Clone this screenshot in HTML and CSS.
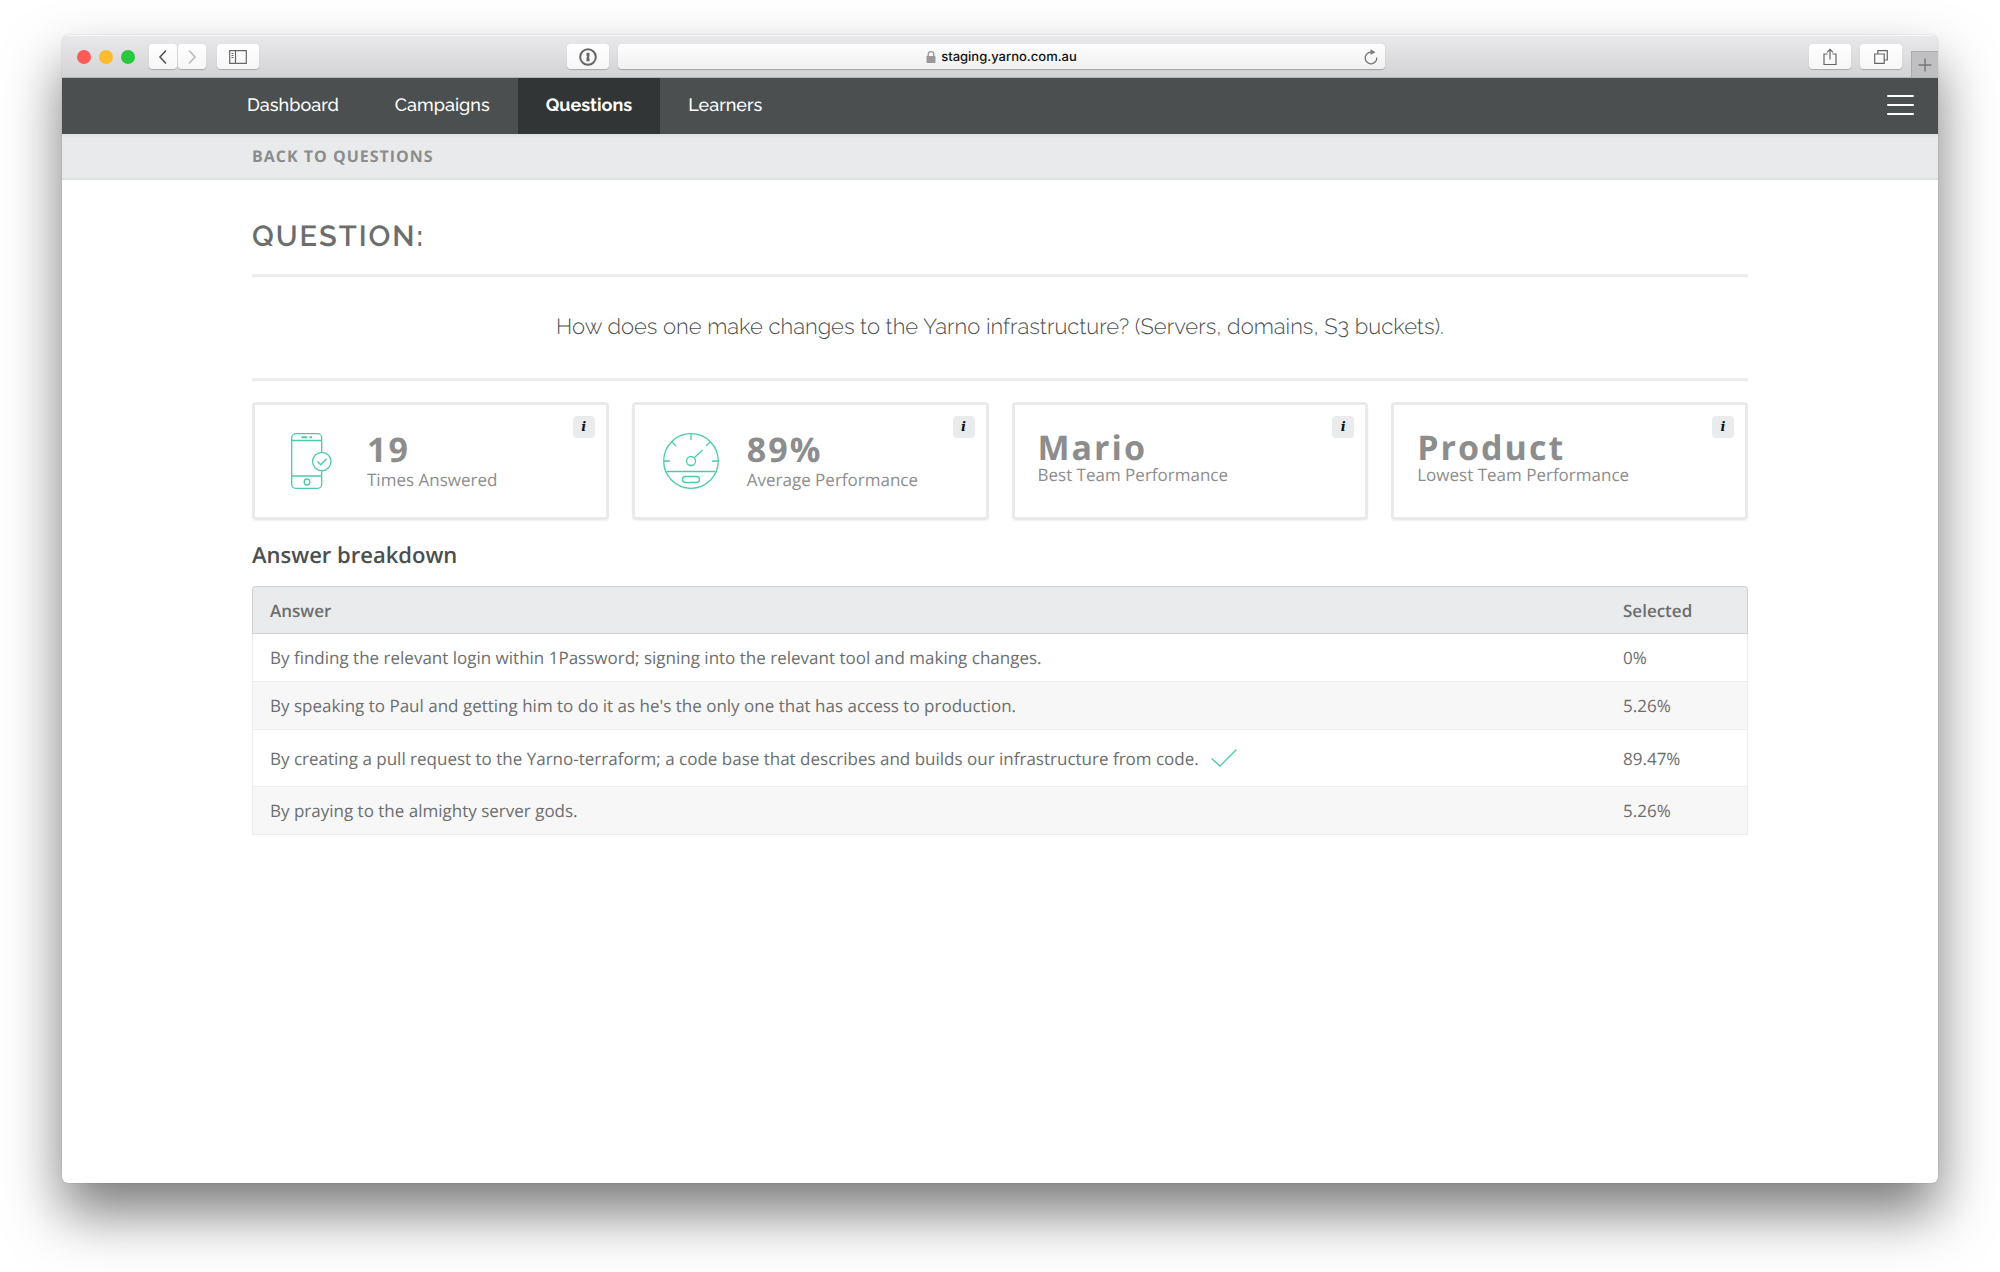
FILE: index.html
```html
<!DOCTYPE html>
<html lang="en">
<head>
<meta charset="utf-8">
<title>Question – Yarno</title>
<link rel="stylesheet" href="styles.css">
</head>
<body>
<div class="window">
  <header class="toolbar">
    <div class="toolbar-side">
      <div class="lights"><span class="light red"></span><span class="light amber"></span><span class="light green"></span></div>
      <div class="history">
        <button class="tool small" aria-label="Back"><svg width="10" height="16" viewBox="0 0 10 16"><path d="M8 1.500L2 8l6 6.500" stroke="#555" stroke-width="1.600"/></svg></button>
        <button class="tool small" aria-label="Forward"><svg width="10" height="16" viewBox="0 0 10 16"><path d="M2 1.500L8 8l-6 6.500" stroke="#bbb" stroke-width="1.600"/></svg></button>
      </div>
      <button class="tool" aria-label="Sidebar"><svg width="18" height="14" viewBox="0 0 18 14"><path d="M.7.7h16.600v12.600H.7zM6.500.7v12.600M2.500 3.500h2M2.500 5.500h2M2.500 7.500h2" stroke="#666" stroke-width="1.200"/></svg></button>
    </div>
    <div class="toolbar-main">
      <button class="tool" aria-label="1Password"><svg width="18" height="18" viewBox="0 0 18 18"><circle cx="9" cy="9" r="7.800" stroke="#666" stroke-width="2"/><path d="M7.500 4.700h3v3.800l-.8.7.8.8v3.300h-3V9.600l.8-.8-.8-.7z" fill="#666"/></svg></button>
      <div class="address">
        <a class="url" href="#"><svg width="10" height="12" viewBox="0 0 10 12"><path d="M2.200 6V3.500a2.800 2.800 0 0 1 5.600 0V6" stroke="#999" stroke-width="1.300"/><rect x=".5" y="5" width="9" height="7" rx=".8" fill="#999"/></svg>staging.yarno.com.au</a>
        <button class="reload" aria-label="Reload"><svg width="14" height="16" viewBox="0 0 14 16"><path d="M12.800 8.500A5.800 5.800 0 1 1 7 3.200h1" stroke="#777" stroke-width="1.300"/><path d="M6.500.3l5 2.900-5 2.600z" fill="#777"/></svg></button>
      </div>
    </div>
    <div class="toolbar-side end">
      <button class="tool" aria-label="Share"><svg width="14" height="18" viewBox="0 0 14 18"><path d="M4.500 6H1v10.500h12V6H9.500M7 11.500V1.500M4 4.300l3-3 3 3" stroke="#666" stroke-width="1.200"/></svg></button>
      <button class="tool" aria-label="Tabs"><svg width="14" height="14" viewBox="0 0 14 14"><path d="M.7 4h9.500v9.300H.7zM3.800 4V.7h9.500V10h-3" stroke="#666" stroke-width="1.200"/></svg></button>
      <button class="new-tab" aria-label="New tab"><svg width="14" height="14" viewBox="0 0 14 14"><path d="M7 .5v13M.5 7h13" stroke="#777" stroke-width="1.400"/></svg></button>
    </div>
  </header>

  <nav class="nav">
    <div class="nav-links">
      <a href="#">Dashboard</a><a href="#">Campaigns</a><a href="#" class="active">Questions</a><a href="#">Learners</a>
    </div>
    <button class="menu" aria-label="Menu"><span></span><span></span><span></span></button>
  </nav>

  <div class="subnav"><div class="container"><a href="#">BACK TO QUESTIONS</a></div></div>

  <main class="container">
    <h1>QUESTION:</h1>
    <p class="question">How does one make changes to the Yarno infrastructure? (Servers, domains, S3 buckets).</p>

    <section class="cards">
      <article class="card with-icon">
        <svg class="stat-icon" width="56" height="56" viewBox="0 0 56 56"><rect x="8.700" y=".7" width="30" height="54.600" rx="4"/><path d="M8.700 7.500h30M8.700 43h30"/><path d="M18.500 4.200h5.500M26.500 4.200h2.500" stroke-width="2"/><ellipse cx="24" cy="49" rx="2.800" ry="3"/><circle cx="38.800" cy="28.500" r="9.200" fill="#fff"/><path d="M34.500 28.500l3.300 3.300 5.700-6"/></svg>
        <div><strong>19</strong><span>Times Answered</span></div>
        <button class="info" aria-label="About times answered">i</button>
      </article>
      <article class="card with-icon">
        <svg class="stat-icon" width="56" height="56" viewBox="0 0 56 56"><circle cx="28" cy="28" r="27.300"/><path d="M28 1v6M1 28h6M49 28h6M9 9l4 4M47 9l-4 4M31 25l8.500-8M3.500 38.500h49"/><circle cx="28" cy="28" r="4.500"/><rect x="19.500" y="43.500" width="17" height="6" rx="3"/></svg>
        <div><strong>89%</strong><span>Average Performance</span></div>
        <button class="info" aria-label="About average performance">i</button>
      </article>
      <article class="card">
        <div><strong>Mario</strong><span>Best Team Performance</span></div>
        <button class="info" aria-label="About best team performance">i</button>
      </article>
      <article class="card">
        <div><strong>Product</strong><span>Lowest Team Performance</span></div>
        <button class="info" aria-label="About lowest team performance">i</button>
      </article>
    </section>

    <h2>Answer breakdown</h2>
    <table>
      <thead><tr><th>Answer</th><th class="selected">Selected</th></tr></thead>
      <tbody>
        <tr><td>By finding the relevant login within 1Password; signing into the relevant tool and making changes.</td><td>0%</td></tr>
        <tr><td>By speaking to Paul and getting him to do it as he's the only one that has access to production.</td><td>5.26%</td></tr>
        <tr class="correct"><td>By creating a pull request to the Yarno-terraform; a code base that describes and builds our infrastructure from code.<svg class="tick" width="26" height="18" viewBox="0 0 26 18"><path d="M.5 9.500L9 17 25.500.5" stroke="#4ccbab" stroke-width="1.300"/></svg></td><td>89.47%</td></tr>
        <tr><td>By praying to the almighty server gods.</td><td>5.26%</td></tr>
      </tbody>
    </table>
  </main>
</div>
</body>
</html>
```
FILE: styles.css
```css
* { box-sizing: border-box; }

body {
  margin: 0;
  padding: 35px 62px 89px;
  background: #fff;
  font-family: "Open Sans", "Noto Sans", sans-serif;
  font-size: 17px;
  color: #6c6e6e;
  text-rendering: geometricPrecision;
}

svg { fill: none; flex: none; }
button { padding: 0; border: 0; font: inherit; }
a { color: inherit; text-decoration: none; }

.window {
  min-height: calc(100vh - 124px);
  overflow: hidden;
  border-radius: 6px;
  background: #fff;
  box-shadow: 0 0 1px rgba(0, 0, 0, .4), 0 30px 56px rgba(0, 0, 0, .52);
}

/* Browser toolbar */
.toolbar {
  display: grid;
  grid-template-columns: 505fr 818px 553fr;
  height: 43px;
  border-top: 1px solid #f6f6f6;
  border-bottom: 1px solid #b5b5b7;
  background: linear-gradient(#e9e8ea, #d3d3d5);
}
.toolbar-side, .toolbar-main { display: flex; align-items: center; }
.toolbar-side { padding-left: 15px; }
.toolbar-side.end { justify-content: flex-end; gap: 9px; padding-left: 0; }
.toolbar-main { gap: 9px; }
.lights { display: flex; gap: 8px; margin-right: 14px; }
.light { width: 14px; height: 14px; border-radius: 50%; }
.red { background: #fc5b57; }
.amber { background: #fdbc2d; }
.green { background: #28c93f; }
.history { display: flex; gap: 1px; margin-right: 11px; }

.tool {
  display: flex;
  align-items: center;
  justify-content: center;
  width: 42px;
  height: 25px;
  border-radius: 4px;
  background: linear-gradient(#fff, #f6f6f6);
  box-shadow: 0 1px 1px rgba(0, 0, 0, .22);
}
.tool.small { width: 28px; }
.address {
  display: flex;
  flex: 1;
  align-items: center;
  height: 25px;
  padding: 0 7px;
  border-radius: 4px;
  background: linear-gradient(#fdfdfd, #f1f1f1);
  box-shadow: 0 1px 1px rgba(0, 0, 0, .25);
}
.url {
  display: flex;
  flex: 1;
  align-items: center;
  justify-content: center;
  gap: 5px;
  padding-left: 14px;
  color: #111;
  font: 500 13px "Inter", sans-serif;
}
.reload { display: flex; background: none; }
.new-tab {
  display: flex;
  align-items: center;
  justify-content: center;
  align-self: flex-end;
  width: 27px;
  height: 26px;
  border: 1px solid #aaa;
  border-width: 1px 0 0 1px;
  background: #c0c0c2;
}

/* Site navigation */
.nav {
  display: flex;
  align-items: stretch;
  justify-content: space-between;
  height: 56px;
  padding: 0 24px 0 157px;
  background: #4b4f50;
  color: #fff;
  font-family: "Raleway", "Lato", sans-serif;
  font-size: 18px;
  font-weight: 500;
}
.nav-links { display: flex; }
.nav-links a { padding: 0 28px; line-height: 55px; }
.nav-links .active { background: #323535; font-weight: 700; }
.menu {
  display: flex;
  flex-direction: column;
  justify-content: center;
  gap: 7px;
  width: 27px;
  padding-bottom: 2px;
  background: none;
}
.menu span { height: 2px; border-radius: 1px; background: #fff; }

.container { max-width: 1496px; margin: 0 auto; }
.subnav {
  border-bottom: 2px solid #dfe1e2;
  background: linear-gradient(#dfe0e2, #e9eaec 5px);
  color: #8b8d8d;
  font-size: 16px;
  font-weight: 700;
  line-height: 44px;
  letter-spacing: 1px;
}

/* Question */
h1 {
  margin: 0;
  padding: 36px 0 18px;
  border-bottom: 3px solid #ebeced;
  font: 600 29px/40px "Raleway", "Lato", sans-serif;
  letter-spacing: 2px;
}
.question {
  margin: 0;
  padding: 30px 0 31px;
  border-bottom: 3px solid #ebeced;
  color: #4b4f50;
  font: 300 22px/40px "Raleway", "Lato", sans-serif;
  text-align: center;
}

/* Statistics */
.cards {
  display: grid;
  grid-template-columns: repeat(4, 1fr);
  gap: 23px;
  margin-top: 21px;
}
.card {
  position: relative;
  display: flex;
  gap: 28px;
  height: 118px;
  padding: 26px 23px 0;
  border: 3px solid #e9ebeb;
  border-radius: 4px;
  box-shadow: 0 1px 2px rgba(0, 0, 0, .06);
  color: #8d8d8d;
}
.card strong {
  display: block;
  font-size: 34px;
  line-height: 32px;
  letter-spacing: 2px;
}
.card span { display: block; line-height: 24px; }
.with-icon { align-items: center; padding: 0 28px; }
.with-icon div { padding-top: 6px; }
.with-icon span { line-height: 30px; }
.stat-icon { stroke: #4ccbab; stroke-width: 1.3px; }
.info {
  position: absolute;
  top: 11px;
  right: 11px;
  width: 22px;
  height: 22px;
  border-radius: 4px;
  background: #e9ebec;
  color: #111;
  font: italic 700 13px/22px "DejaVu Serif", serif;
}

/* Answers */
h2 {
  margin: 20px 0 16px;
  color: #4b4f50;
  font-size: 22px;
  font-weight: 600;
  line-height: 30px;
}
table {
  width: 100%;
  border-spacing: 0;
}
th {
  height: 48px;
  padding: 0 17px;
  border: 1px solid #cfd2d3;
  border-width: 1px 0;
  background: #e9ebec;
  font-weight: 600;
  text-align: left;
}
th:first-child { border-left-width: 1px; border-top-left-radius: 4px; }
th:last-child { border-right-width: 1px; border-top-right-radius: 4px; }
.selected { width: 142px; }
td {
  height: 48px;
  padding: 0 17px;
  border-bottom: 1px solid #ebecec;
}
td:first-child { border-left: 1px solid #ebecec; }
td:last-child { border-right: 1px solid #ebecec; }
tbody tr:nth-child(even) { background: #f7f7f7; }
.correct td { height: 57px; }
.tick { margin-left: 12px; vertical-align: -2px; }
```
